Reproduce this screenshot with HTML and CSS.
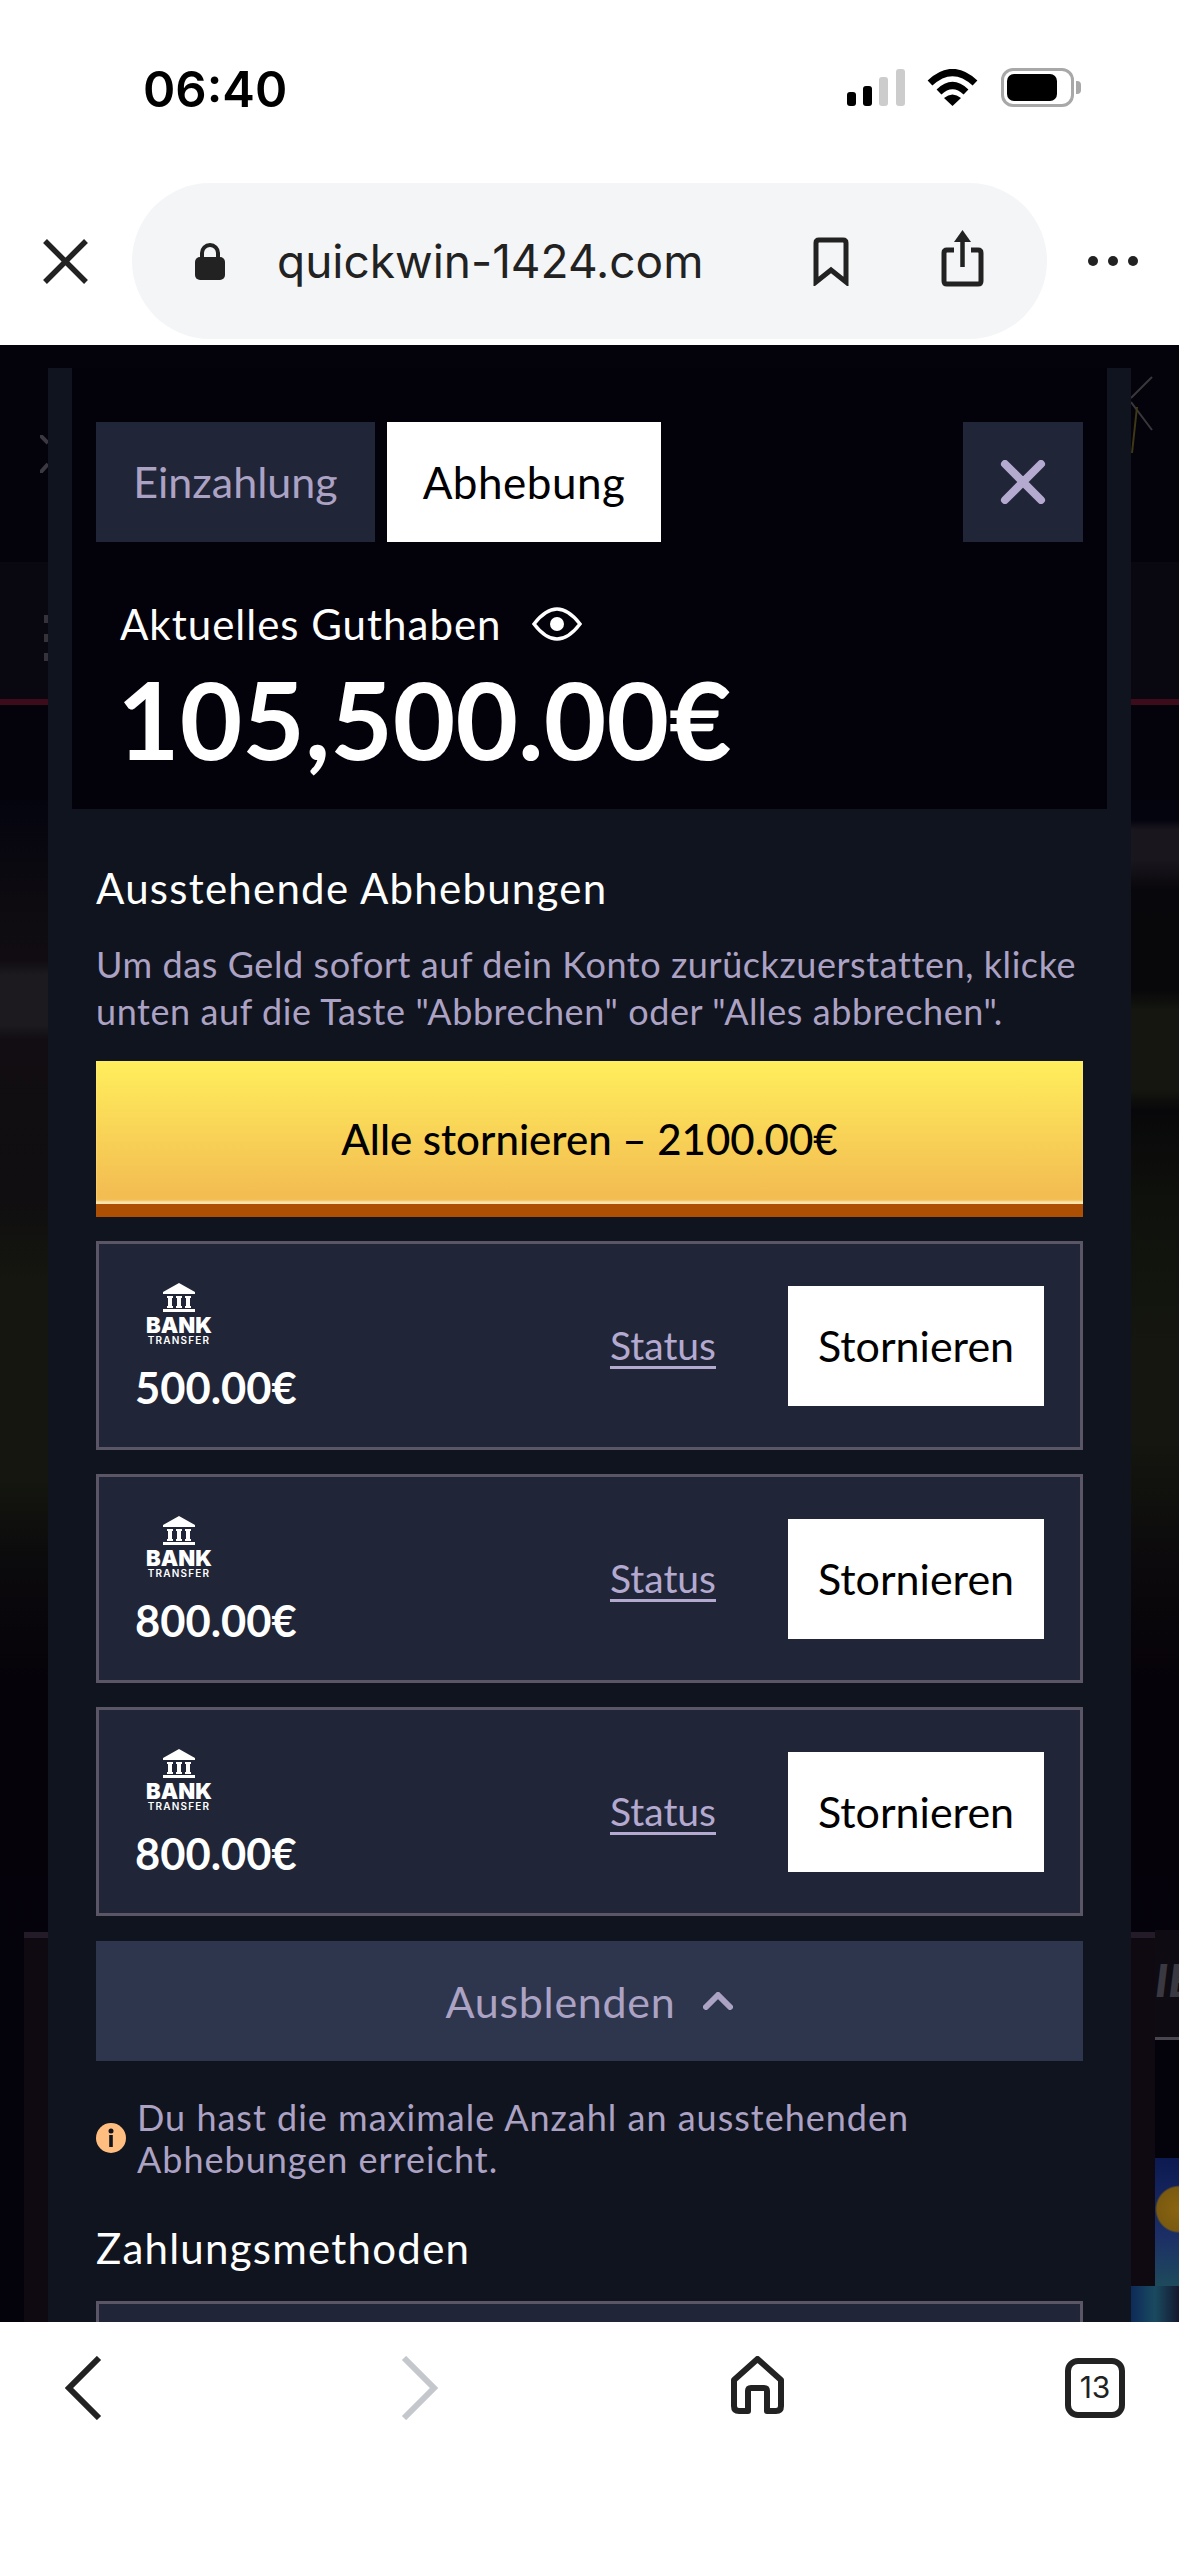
FILE: index.html
```html
<!DOCTYPE html>
<html lang="de">
<head>
    <meta charset="UTF-8">
    <meta name="viewport" content="width=device-width, initial-scale=1.0">
    <title>Abhebung - quickwin-1424.com</title>
    <link rel="stylesheet" href="styles.css">
</head>
<body>
    <div class="phone">
        <div class="status-bar">
            <span class="clock">06:40</span>
            <div class="status-icons">
                <svg class="icon-signal" width="58" height="37" viewBox="0 0 58 37">
                    <rect x="0" y="23" width="9" height="14" rx="3" fill="#000"/>
                    <rect x="16" y="17" width="9" height="20" rx="3" fill="#000"/>
                    <rect x="32" y="8" width="9" height="29" rx="3" fill="#ccc"/>
                    <rect x="49" y="0" width="9" height="37" rx="3" fill="#ccc"/>
                </svg>
                <svg class="icon-wifi" width="51" height="37" viewBox="0 0 51 37">
                    <path d="M3 14 Q25.5 -7 48 14" fill="none" stroke="#000" stroke-width="7"/>
                    <path d="M12 23 Q25.5 10 39 23" fill="none" stroke="#000" stroke-width="7"/>
                    <path d="M25.5 37 L17 29 Q25.5 22 34 29 Z" fill="#000"/>
                </svg>
                <div class="battery">
                    <div class="battery-fill"></div>
                </div>
                <div class="battery-nub"></div>
            </div>
        </div>

        <div class="toolbar">
            <svg class="toolbar-close" width="45" height="45" viewBox="0 0 45 45">
                <path d="M2 2 L43 43 M43 2 L2 43" stroke="#222" stroke-width="5.5" fill="none"/>
            </svg>
            <div class="address-bar">
                <svg width="30" height="37" viewBox="0 0 30 37">
                    <rect x="0" y="14" width="30" height="23" rx="5" fill="#222"/>
                    <path d="M7 16 V10 a8 8 0 0 1 16 0 V16" fill="none" stroke="#222" stroke-width="4"/>
                </svg>
                <span class="url">quickwin-1424.com</span>
                <svg class="icon-bookmark" width="36" height="49" viewBox="0 0 36 49">
                    <path d="M3 6 Q3 3 6 3 H30 Q33 3 33 6 V45 L18 33 L3 45 Z" fill="none" stroke="#222" stroke-width="5"/>
                </svg>
                <svg class="icon-share" width="43" height="57" viewBox="0 0 43 57">
                    <path d="M13 20 H6 Q3 20 3 23 V51 Q3 54 6 54 H37 Q40 54 40 51 V23 Q40 20 37 20 H30" fill="none" stroke="#222" stroke-width="5"/>
                    <path d="M21.5 8 V37" stroke="#222" stroke-width="4.5"/>
                    <path d="M21.5 0 L13 12 H30 Z" fill="#222"/>
                </svg>
            </div>
            <svg class="toolbar-more" width="50" height="10" viewBox="0 0 50 10">
                <circle cx="5" cy="5" r="5" fill="#222"/>
                <circle cx="25" cy="5" r="5" fill="#222"/>
                <circle cx="45" cy="5" r="5" fill="#222"/>
            </svg>
        </div>

        <div class="stage">
            <!-- dimmed casino page behind the modal -->
            <div class="backdrop">
                <div class="page-header"></div>
                <div class="page-redline"></div>
                <div class="page-side page-side-left"></div>
                <div class="page-side page-side-right"></div>
                <div class="strip strip-left"></div>
                <div class="strip strip-right"></div>
                <div class="games-head"><span>IE</span></div>
                <div class="game-tile"></div>
                <div class="game-tile-low"></div>
                <svg class="page-x" width="8" height="38" viewBox="0 0 8 38">
                    <path d="M0 0 L8 8 M0 38 L8 29" stroke="#3c3842" stroke-width="4"/>
                </svg>
                <div class="page-dots"><i></i><i></i><i></i></div>
                <svg class="page-star" width="24" height="80" viewBox="0 0 24 80">
                    <path d="M0 23 L21 2 M0 27 L21 55" stroke="#3a373c" stroke-width="2"/>
                    <path d="M6 32 L1 78" stroke="#3e3814" stroke-width="2"/>
                </svg>
            </div>

            <div class="modal">
                <div class="modal-top">
                    <div class="tabs">
                        <button class="tab tab-off">Einzahlung</button>
                        <button class="tab tab-on">Abhebung</button>
                        <button class="tab-close">
                            <svg width="46" height="44" viewBox="0 0 46 44">
                                <path d="M5 4 L41 40 M41 4 L5 40" stroke="#b4a9cf" stroke-width="8" stroke-linecap="round"/>
                            </svg>
                        </button>
                    </div>
                    <div class="balance-label">
                        <span>Aktuelles Guthaben</span>
                        <svg width="50" height="36" viewBox="0 0 50 36">
                            <path d="M2 18 Q25 -12 48 18 Q25 48 2 18 Z" fill="none" stroke="#fff" stroke-width="3.5"/>
                            <circle cx="25" cy="18" r="7" fill="#fff"/>
                        </svg>
                    </div>
                    <div class="balance">105,500.00€</div>
                </div>

                <div class="modal-body">
                    <h2 class="section-title">Ausstehende Abhebungen</h2>
                    <p class="hint">Um das Geld sofort auf dein Konto zurückzuerstatten, klicke unten auf die Taste "Abbrechen" oder "Alles abbrechen".</p>
                    <button class="cancel-all">Alle stornieren – 2100.00€</button>

                    <div class="pending-list">
                        <div class="pending-card">
                            <div class="pending-info">
                                <div class="bank-logo">
                                    <svg width="32" height="29" viewBox="0 0 32 29">
                                        <path d="M16 0 L32 9 V11 H0 V9 Z M4 13 H10 V15 H9 V23 H10 V25 H4 V23 H5 V15 H4 Z M13 13 H19 V15 H18 V23 H19 V25 H13 V23 H14 V15 H13 Z M22 13 H28 V15 H27 V23 H28 V25 H22 V23 H23 V15 H22 Z M0 26 H32 V29 H0 Z" fill="#fff"/>
                                    </svg>
                                    <span class="bank-word">BANK</span>
                                    <span class="bank-sub">TRANSFER</span>
                                </div>
                                <div class="amount">500.00€</div>
                            </div>
                            <a class="status-link">Status</a>
                            <button class="cancel-btn">Stornieren</button>
                        </div>
                        <div class="pending-card">
                            <div class="pending-info">
                                <div class="bank-logo">
                                    <svg width="32" height="29" viewBox="0 0 32 29">
                                        <path d="M16 0 L32 9 V11 H0 V9 Z M4 13 H10 V15 H9 V23 H10 V25 H4 V23 H5 V15 H4 Z M13 13 H19 V15 H18 V23 H19 V25 H13 V23 H14 V15 H13 Z M22 13 H28 V15 H27 V23 H28 V25 H22 V23 H23 V15 H22 Z M0 26 H32 V29 H0 Z" fill="#fff"/>
                                    </svg>
                                    <span class="bank-word">BANK</span>
                                    <span class="bank-sub">TRANSFER</span>
                                </div>
                                <div class="amount">800.00€</div>
                            </div>
                            <a class="status-link">Status</a>
                            <button class="cancel-btn">Stornieren</button>
                        </div>
                        <div class="pending-card">
                            <div class="pending-info">
                                <div class="bank-logo">
                                    <svg width="32" height="29" viewBox="0 0 32 29">
                                        <path d="M16 0 L32 9 V11 H0 V9 Z M4 13 H10 V15 H9 V23 H10 V25 H4 V23 H5 V15 H4 Z M13 13 H19 V15 H18 V23 H19 V25 H13 V23 H14 V15 H13 Z M22 13 H28 V15 H27 V23 H28 V25 H22 V23 H23 V15 H22 Z M0 26 H32 V29 H0 Z" fill="#fff"/>
                                    </svg>
                                    <span class="bank-word">BANK</span>
                                    <span class="bank-sub">TRANSFER</span>
                                </div>
                                <div class="amount">800.00€</div>
                            </div>
                            <a class="status-link">Status</a>
                            <button class="cancel-btn">Stornieren</button>
                        </div>
                    </div>

                    <button class="collapse-btn">
                        <span>Ausblenden</span>
                        <svg width="30" height="18" viewBox="0 0 30 18">
                            <path d="M3 15 L15 3 L27 15" fill="none" stroke="#aca2c4" stroke-width="6" stroke-linecap="round" stroke-linejoin="round"/>
                        </svg>
                    </button>

                    <div class="notice">
                        <svg width="30" height="30" viewBox="0 0 30 30">
                            <circle cx="15" cy="15" r="15" fill="#ffbd7f"/>
                            <circle cx="15" cy="8" r="2.5" fill="#10141f"/>
                            <rect x="13.2" y="12" width="3.6" height="12" fill="#10141f"/>
                        </svg>
                        <p>Du hast die maximale Anzahl an ausstehenden Abhebungen erreicht.</p>
                    </div>

                    <h2 class="section-title methods-title">Zahlungsmethoden</h2>
                    <div class="pending-card method-card"></div>
                </div>
            </div>
        </div>

        <div class="bottom-bar">
            <svg width="37" height="64" viewBox="0 0 37 64">
                <path d="M34 2 L4 32 L34 62" fill="none" stroke="#222" stroke-width="6"/>
            </svg>
            <svg width="38" height="64" viewBox="0 0 38 64">
                <path d="M3 2 L33 32 L3 62" fill="none" stroke="#c4c7cc" stroke-width="6"/>
            </svg>
            <svg width="53" height="58" viewBox="0 0 53 58">
                <path d="M3 24 L26.5 3 L50 24 V50 Q50 55 45 55 H36 V35 Q36 32 33 32 H20 Q17 32 17 35 V55 H8 Q3 55 3 50 Z" fill="none" stroke="#222" stroke-width="6" stroke-linejoin="round"/>
            </svg>
            <div class="tab-count">13</div>
        </div>
    </div>
</body>
</html>
```

FILE: styles.css
```css
* {
    box-sizing: border-box;
}
body {
    margin: 0;
    background-color: #fff;
    font-family: 'Lato', 'Noto Sans', sans-serif;
}
button {
    font-family: inherit;
    border: none;
    padding: 0;
    margin: 0;
}
.phone {
    width: 1179px;
    height: 2556px;
    display: flex;
    flex-direction: column;
    overflow: hidden;
}

/* status bar */
.status-bar {
    height: 172px;
    flex: none;
    display: flex;
    justify-content: space-between;
    align-items: flex-start;
    padding: 60px 98px 0 143px;
}
.clock {
    font-family: 'Inter', sans-serif;
    font-size: 49px;
    font-weight: 600;
    line-height: 60px;
    color: #000;
}
.status-icons {
    display: flex;
    align-items: center;
    padding-top: 8px;
}
.icon-wifi {
    margin-left: 22px;
}
.battery {
    margin-left: 23px;
    width: 73px;
    height: 39px;
    border: 3px solid #a8a8a8;
    border-radius: 12px;
    padding: 3px;
}
.battery-fill {
    width: 50px;
    height: 100%;
    background-color: #000;
    border-radius: 7px;
}
.battery-nub {
    width: 5px;
    height: 13px;
    margin-left: 2px;
    background-color: #a8a8a8;
    border-radius: 0 4px 4px 0;
}

/* url toolbar */
.toolbar {
    height: 173px;
    flex: none;
    display: flex;
    align-items: center;
    padding: 11px 41px 6px 43px;
}
.toolbar-close {
    flex: none;
}
.address-bar {
    width: 915px;
    height: 156px;
    margin-left: 44px;
    display: flex;
    align-items: center;
    padding-left: 63px;
    background-color: #f4f5f7;
    border-radius: 78px;
}
.url {
    font-family: 'Inter', sans-serif;
    font-size: 46px;
    color: #222;
    margin-left: 52px;
    width: 536px;
    white-space: nowrap;
}
.icon-share {
    margin-left: 92px;
    margin-top: -6px;
}
.toolbar-more {
    flex: none;
    margin-left: 41px;
}

/* dimmed page + modal */
.stage {
    position: relative;
    height: 1977px;
    flex: none;
    overflow: hidden;
    background-color: #04020b;
}
.backdrop {
    position: absolute;
    inset: 0;
}
.backdrop > * {
    position: absolute;
}
.page-header {
    left: 0;
    right: 0;
    top: 217px;
    height: 137px;
    background-color: #090710;
}
.page-redline {
    left: 0;
    right: 0;
    top: 354px;
    height: 6px;
    background-color: #3d0c1a;
}
.page-side {
    top: 455px;
    height: 1200px;
    width: 48px;
}
.page-side-left {
    left: 0;
    background: linear-gradient(to bottom, #04040f 0, #0d0b10 100px, #100c12 160px, #1c1a1e 175px, #1c1a1e 225px, #110d12 240px, #100e10 400px, #14160f 480px, #14160f 680px, #0b0a0c 760px, #060209 880px, #04020b 1200px);
}
.page-side-right {
    right: 0;
    background: linear-gradient(to bottom, #04040f 0, #04040f 20px, #1a161e 30px, #1a161e 60px, #08070b 90px, #08080a 190px, #14160f 210px, #14160f 290px, #08080a 310px, #0f110c 400px, #14160f 550px, #14160f 640px, #0c0a0c 760px, #060209 880px, #04020b 1200px);
}
.strip {
    top: 1587px;
    bottom: 0;
    width: 48px;
    background-color: #0f0a11;
    border-top: 6px solid #231c28;
}
.strip-left {
    left: 24px;
}
.strip-right {
    left: 1131px;
    width: 24px;
    bottom: 36px;
}
.games-head {
    left: 1155px;
    right: 0;
    top: 1585px;
    height: 110px;
    border-bottom: 3px solid #4a4650;
    background-color: #0e0b12;
}
.games-head span {
    display: block;
    margin-top: 27px;
    font-size: 46px;
    line-height: 46px;
    font-weight: 900;
    font-style: italic;
    color: #3a3840;
}
.game-tile {
    left: 1155px;
    right: 0;
    top: 1813px;
    height: 128px;
    background: radial-gradient(circle at 100% 40%, #8a6410 0, #7a5a10 22px, transparent 24px), linear-gradient(to bottom, #0d1a52, #1c2e66 60%, #1e4a5c);
}
.game-tile-low {
    left: 1131px;
    right: 0;
    top: 1941px;
    height: 36px;
    background: linear-gradient(to right, #0d2a58, #1a4a60, #14182e);
}
.page-x {
    left: 40px;
    top: 90px;
}
.page-dots {
    left: 44px;
    top: 270px;
    display: flex;
    flex-direction: column;
    gap: 11px;
}
.page-dots i {
    display: block;
    width: 4px;
    height: 8px;
    background-color: #35323a;
}
.page-star {
    left: 1131px;
    top: 30px;
}
.modal {
    position: relative;
    margin: 23px 48px 0;
    background-color: #10141f;
}
.modal-top {
    margin: 0 24px;
    height: 441px;
    padding: 54px 24px 0;
    background-color: #030109;
}
.tabs {
    display: flex;
    gap: 12px;
    height: 120px;
}
.tab {
    height: 120px;
    line-height: 120px;
    padding-bottom: 2px;
}
.tab-off {
    width: 279px;
    font-size: 43px;
    background-color: #202638;
    color: #aca2c4;
}
.tab-on {
    width: 274px;
    font-size: 44px;
    letter-spacing: 0.5px;
    background-color: #fff;
    color: #000;
}
.tab-close {
    width: 120px;
    height: 120px;
    margin-left: auto;
    background-color: #202638;
    display: flex;
    align-items: center;
    justify-content: center;
}
.balance-label {
    display: flex;
    align-items: center;
    gap: 30px;
    margin: 59px 0 0 24px;
    height: 46px;
    font-size: 42px;
    letter-spacing: 1px;
    color: #fff;
}
.balance {
    margin: 13px 0 0 21px;
    font-size: 108px;
    line-height: 116px;
    font-weight: 700;
    color: #fff;
}
.modal-body {
    padding: 56px 48px 0;
}
.section-title {
    margin: 0;
    font-size: 42px;
    letter-spacing: 1.25px;
    font-weight: 400;
    line-height: 46px;
    color: #fff;
}
.hint {
    margin: 30px 0 0;
    font-size: 36px;
    letter-spacing: 0.58px;
    line-height: 47px;
    color: #aca2c4;
}
.cancel-all {
    display: block;
    width: 100%;
    height: 156px;
    margin-top: 26px;
    padding-top: 13px;
    border-bottom: 13px solid #ae5003;
    background: linear-gradient(to bottom, #ffee5c, #f3bd52 92%);
    box-shadow: inset 0 -3px 2px #fbe6b0;
    font-size: 42px;
    font-weight: 500;
    color: #000;
}
.pending-list {
    display: flex;
    flex-direction: column;
    gap: 24px;
    margin-top: 24px;
}
.pending-card {
    height: 209px;
    display: flex;
    align-items: center;
    padding: 0 36px;
    background-color: #202638;
    border: 3px solid #5a5666;
}
.pending-info {
    display: flex;
    flex-direction: column;
    align-items: flex-start;
    margin-top: 3px;
}
.bank-logo {
    display: flex;
    flex-direction: column;
    align-items: center;
    width: 64px;
    margin-left: 12px;
    color: #fff;
}
.bank-word {
    font-family: 'Inter', sans-serif;
    font-size: 22px;
    line-height: 20px;
    font-weight: 900;
    margin-top: 3px;
}
.bank-sub {
    font-family: 'Inter', sans-serif;
    font-size: 10px;
    line-height: 10px;
    font-weight: 600;
    letter-spacing: 1.2px;
    white-space: nowrap;
}
.amount {
    margin-top: 18px;
    font-size: 43.5px;
    line-height: 48px;
    font-weight: 700;
    color: #fff;
}
.status-link {
    margin-left: auto;
    margin-top: -2px;
    font-size: 39px;
    color: #b4a9cf;
    text-decoration: underline;
    text-underline-offset: 6px;
    text-decoration-thickness: 2.5px;
}
.cancel-btn {
    width: 256px;
    height: 120px;
    margin-left: 72px;
    background-color: #fff;
    font-size: 43px;
    color: #000;
}
.collapse-btn {
    display: flex;
    align-items: center;
    justify-content: center;
    gap: 28px;
    width: 100%;
    height: 120px;
    margin-top: 25px;
    background-color: #2e364d;
    font-size: 43px;
    letter-spacing: 0.7px;
    color: #aca2c4;
}
.notice {
    display: flex;
    align-items: center;
    gap: 11px;
    margin-top: 35px;
    color: #aca2c4;
}
.notice svg {
    flex: none;
}
.notice p {
    margin: 0;
    width: 900px;
    font-size: 36px;
    letter-spacing: 1px;
    line-height: 42px;
}
.methods-title {
    margin-top: 45px;
}
.method-card {
    margin-top: 30px;
}

/* bottom toolbar */
.bottom-bar {
    flex: 1;
    display: grid;
    grid-template-columns: 336px 330px 334px auto;
    align-items: start;
    padding: 34px 0 0 65px;
    background-color: #fff;
}
.tab-count {
    width: 60px;
    height: 60px;
    margin-top: 2px;
    border: 6px solid #222;
    border-radius: 13px;
    font-family: 'Inter', sans-serif;
    font-size: 30px;
    line-height: 47px;
    text-align: center;
    color: #222;
}
```
